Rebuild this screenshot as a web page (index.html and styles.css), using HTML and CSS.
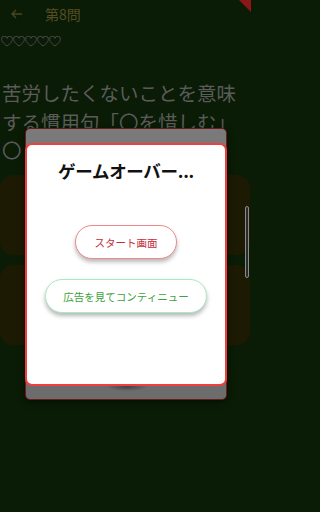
FILE: index.html
```html
<!DOCTYPE html>
<html lang="ja">
<head>
<meta charset="utf-8">
<link rel="stylesheet" href="styles.css">
</head>
<body>
<div class="page">
  <header class="appbar">
    <svg class="back" width="12" height="10" viewBox="0 0 12 10"><path d="M11 5H1.5M5 1L1 5l4 4" fill="none" stroke="currentColor" stroke-width="1.3"/></svg>
    <span class="title">第8問</span>
  </header>
  <div class="hearts">
    <svg viewBox="0 0 12 11"><path d="M6 10C2 7 .7 5.3.7 3.4A2.6 2.6 0 0 1 6 2.3a2.6 2.6 0 0 1 5.3 1.1C11.3 5.3 10 7 6 10z"/></svg>
    <svg viewBox="0 0 12 11"><path d="M6 10C2 7 .7 5.3.7 3.4A2.6 2.6 0 0 1 6 2.3a2.6 2.6 0 0 1 5.3 1.1C11.3 5.3 10 7 6 10z"/></svg>
    <svg viewBox="0 0 12 11"><path d="M6 10C2 7 .7 5.3.7 3.4A2.6 2.6 0 0 1 6 2.3a2.6 2.6 0 0 1 5.3 1.1C11.3 5.3 10 7 6 10z"/></svg>
    <svg viewBox="0 0 12 11"><path d="M6 10C2 7 .7 5.3.7 3.4A2.6 2.6 0 0 1 6 2.3a2.6 2.6 0 0 1 5.3 1.1C11.3 5.3 10 7 6 10z"/></svg>
    <svg viewBox="0 0 12 11"><path d="M6 10C2 7 .7 5.3.7 3.4A2.6 2.6 0 0 1 6 2.3a2.6 2.6 0 0 1 5.3 1.1C11.3 5.3 10 7 6 10z"/></svg>
  </div>
  <p class="question">苦労したくないことを意味する慣用句「〇を惜しむ」〇</p>
  <div class="answers">
    <div class="card"></div>
    <div class="card"></div>
  </div>
</div>

<div class="corner"></div>
<div class="scrollbar"></div>

<div class="modal">
  <div class="dialog">
    <h2 class="dialog-title">ゲームオーバー...</h2>
    <div class="actions">
      <button class="pill pill-red">スタート画面</button>
      <button class="pill pill-green">広告を見てコンティニュー</button>
    </div>
  </div>
  <div class="modal-shadow"></div>
</div>
</body>
</html>
```

FILE: styles.css
```css
* { box-sizing: border-box; }
html {
  background: #0a1c05;
}
html, body {
  margin: 0;
  height: 512px;
  overflow: hidden;
}
body {
  position: relative;
  width: 251px;
  background: #0a1c05;
  font-family: "Noto Sans CJK JP", "Noto Sans", sans-serif;
}

.page {
  display: flex;
  flex-direction: column;
}

.appbar {
  height: 27px;
  display: flex;
  align-items: center;
  padding-left: 11px;
  gap: 22px;
  color: #4d4620;
}
.back { display: block; }
.title {
  font-size: 14px;
  color: #574d22;
  line-height: 1;
}

.hearts {
  display: flex;
  padding: 9px 0 0 1px;
  height: 27px;
}
.hearts svg {
  width: 12px;
  height: 11px;
  fill: none;
  stroke: #4a4a4a;
  stroke-width: 1;
}

.question {
  margin: 25px 0 0 2px;
  font-size: 19.5px;
  line-height: 28.5px;
  color: #5b5b5b;
  height: 86px;
  overflow: hidden;
}

.answers {
  display: flex;
  flex-direction: column;
  gap: 10px;
  margin-top: 10px;
  padding: 0 1px 0 0;
}
.card {
  height: 80px;
  background: #1d1a03;
  border-radius: 13px;
}

.corner {
  position: absolute;
  top: 0;
  right: 0;
  width: 12px;
  height: 12px;
  background: #8a1818;
  clip-path: polygon(0 0, 100% 0, 100% 100%);
}

.scrollbar {
  position: absolute;
  top: 206px;
  left: 245px;
  width: 4px;
  height: 72px;
  border: 1px solid #8a8a8a;
  border-radius: 2px;
  background: #2a2a2a;
}

.modal {
  position: absolute;
  top: 128px;
  left: 25px;
  width: 202px;
  height: 272px;
  background: linear-gradient(#7a7a7a, #6c6c6c);
  border: 1px solid #6b1b1b;
  border-radius: 5px;
  padding-top: 14px;
  box-shadow: 0 2px 6px rgba(0,0,0,.5);
}
.dialog {
  position: relative;
  z-index: 1;
  height: 243px;
  margin: 0 -1px;
  background: #fff;
  border: 2px solid #ef3f3f;
  border-radius: 7px;
  display: flex;
  flex-direction: column;
  align-items: center;
}
.modal-shadow {
  position: absolute;
  left: 80px;
  bottom: 8px;
  width: 42px;
  height: 8px;
  border-radius: 50%;
  background: radial-gradient(rgba(50,50,50,.7), rgba(60,60,60,0) 70%);
}
.dialog-title {
  margin: 14px 0 0;
  font-size: 17.5px;
  font-weight: bold;
  color: #111;
  line-height: 24px;
  letter-spacing: -0.3px;
}
.actions {
  display: flex;
  flex-direction: column;
  align-items: center;
  gap: 20px;
  margin-top: 42px;
}
.pill {
  height: 34px;
  border-radius: 17px;
  background: #fff;
  font-family: "Noto Sans CJK JP", "Noto Sans", sans-serif;
  font-size: 10.5px;
  padding: 0;
  box-shadow: 0 3px 4px rgba(0,0,0,.28);
}
.pill-red {
  width: 102px;
  color: #c0303c;
  border: 1px solid #f08a8a;
}
.pill-green {
  width: 162px;
  color: #3ea23e;
  border: 1px solid #a8eac4;
}
```
